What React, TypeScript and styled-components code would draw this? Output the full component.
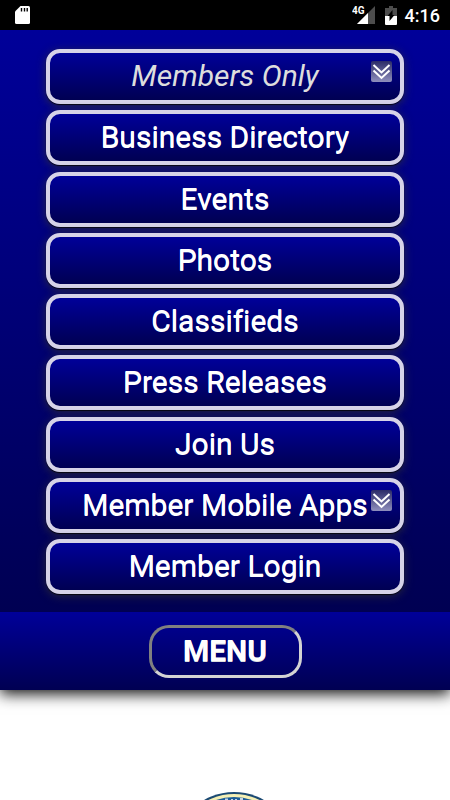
import React from "react";
import styled, { createGlobalStyle, css } from "styled-components";

const Global = createGlobalStyle`
  * { box-sizing: border-box; }
  html, body { margin: 0; background: #fff; }
  body { font-family: Roboto, "Liberation Sans", sans-serif; overflow: hidden; }
`;

const Page = styled.div`
  display: flex;
  flex-direction: column;
  height: 100vh;
  overflow: hidden;
`;

const StatusBar = styled.header`
  display: flex;
  align-items: center;
  flex: none;
  height: 30px;
  padding: 0 10px 0 15px;
  background: #000;
  color: #fff;
`;

const StatusIcons = styled.div`
  display: flex;
  align-items: center;
  margin-left: auto;
`;

const SignalIcon = styled.svg`
  margin-right: 10px;
`;

const Clock = styled.time`
  margin-left: 8px;
  font-size: 18px;
  line-height: 30px;
  font-weight: 500;
  padding-top: 2px;
`;

const Panel = styled.nav`
  flex: none;
  padding: 19px 46px 18px;
  background: linear-gradient(#000099, #000052);
`;

const MenuList = styled.ul`
  display: flex;
  flex-direction: column;
  justify-content: space-between;
  min-height: 545px;
  margin: 0;
  padding: 0;
  list-style: none;
`;

const itemStyle = css`
  display: flex;
  align-items: center;
  justify-content: center;
  position: relative;
  width: 100%;
  height: 55px;
  padding: 0 0 1px;
  border: 4px solid #d6d3e8;
  border-radius: 14px;
  background: linear-gradient(#000099, #000052);
  box-shadow: 0 1px 1px rgba(0, 0, 0, 0.8), 0 2px 10px rgba(51, 51, 51, 0.8);
  color: #fff;
  font-family: inherit;
  font-size: 30px;
  line-height: 36px;
  font-weight: 400;
  font-variant-ligatures: none;
  text-decoration: none;
  text-shadow: 0 1px 0 #fff;
  white-space: nowrap;
`;

const MenuLink = styled.a`
  ${itemStyle}
`;

const MenuToggle = styled.button<{ $muted?: boolean }>`
  ${itemStyle}
  ${(p) =>
    p.$muted &&
    css`
      color: #dddddd;
      font-style: italic;
      text-shadow: none;
    `}
`;

const ArrowBadge = styled.svg`
  position: absolute;
  top: 8px;
  right: 8px;
`;

const MenuBar = styled.div`
  display: flex;
  align-items: center;
  justify-content: center;
  flex: none;
  height: 78px;
  position: relative;
  background: linear-gradient(#000099, #000052);
  box-shadow: 0 4px 14px #111;
  clip-path: inset(0 0 -30px 0);
`;

const MenuButton = styled.button`
  width: 153px;
  height: 53px;
  padding: 0;
  border: 3px solid;
  border-color: #808080 #d3d3d3 #d3d3d3 #808080;
  border-radius: 20px;
  background: transparent;
  color: #fff;
  font-family: inherit;
  font-size: 30px;
  line-height: 36px;
  font-weight: 700;
  text-shadow: 0 1px 0 #ddd;
`;

const Content = styled.main`
  display: flex;
  justify-content: center;
  flex: 1;
  min-height: 0;
  padding-top: 102px;
  overflow: hidden;
`;

const Seal = styled.svg`
  flex: none;
  margin-left: 18px;
`;

function DoubleArrow() {
  return (
    <ArrowBadge width="21" height="21" viewBox="0 0 21 21" aria-hidden="true">
      <defs>
        <linearGradient id="badge" x1="0" y1="0" x2="0" y2="1">
          <stop offset="0" stopColor="#2c2c68" />
          <stop offset="1" stopColor="#8f8fbd" />
        </linearGradient>
      </defs>
      <rect width="21" height="21" rx="2" fill="url(#badge)" />
      <path d="M2.5 4l8 7.5 8-7.5M2.5 9.5l8 7.5 8-7.5" fill="none" stroke="#fff" strokeWidth="2" />
    </ArrowBadge>
  );
}

const items: { label: string; toggle?: boolean; muted?: boolean }[] = [
  { label: "Members Only", toggle: true, muted: true },
  { label: "Business Directory" },
  { label: "Events" },
  { label: "Photos" },
  { label: "Classifieds" },
  { label: "Press Releases" },
  { label: "Join Us" },
  { label: "Member Mobile Apps", toggle: true },
  { label: "Member Login" },
];

export default function App() {
  return (
    <Page>
      <Global />
      <StatusBar>
        <svg width="15" height="18" viewBox="0 0 15 18" aria-hidden="true">
          <path d="M5.5 0H13.5Q15 0 15 1.5V16.5Q15 18 13.5 18H1.5Q0 18 0 16.5V5.5Z" fill="#fff" />
          <path d="M6.5 2v3.5M9.5 2v3.5M12.2 2v3.5" stroke="#000" strokeWidth="1.4" />
        </svg>
        <StatusIcons>
          <SignalIcon width="23" height="20" viewBox="0 0 23 20" aria-hidden="true">
            <path d="M23 1V19H5Z" fill="#4d4d4d" />
            <path d="M16 8V19H5Z" fill="#fff" />
            <text x="0" y="9" fill="#fff" fontSize="10" fontWeight="700">4G</text>
          </SignalIcon>
          <svg width="12" height="19" viewBox="0 0 12 19" aria-hidden="true">
            <path d="M4 0h4v2h4v9H0V2h4Z" fill="#4d4d4d" />
            <path d="M0 10h12v8q0 1-1 1H1q-1 0-1-1Z" fill="#fff" />
            <path d="M7.5 4v5h2l-5 6v-5H2.5Z" fill="#000" />
          </svg>
          <Clock>4:16</Clock>
        </StatusIcons>
      </StatusBar>
      <Panel>
        <MenuList>
          {items.map((item) => (
            <li key={item.label}>
              {item.toggle ? (
                <MenuToggle type="button" $muted={item.muted}>
                  {item.label}
                  <DoubleArrow />
                </MenuToggle>
              ) : (
                <MenuLink href="#">{item.label}</MenuLink>
              )}
            </li>
          ))}
        </MenuList>
      </Panel>
      <MenuBar>
        <MenuButton type="button">MENU</MenuButton>
      </MenuBar>
      <Content>
        <Seal width="120" height="120" viewBox="0 0 120 120" aria-hidden="true">
          <circle cx="60" cy="60" r="60" fill="#1b4a73" />
          <circle cx="60" cy="60" r="58" fill="#f4efb4" />
          <circle cx="60" cy="60" r="55" fill="#1b5c98" />
          <path d="M51 7.5h3M58 7v2M62 7v2M66 7h3" stroke="#c5d5e5" strokeWidth="2" />
        </Seal>
      </Content>
    </Page>
  );
}
